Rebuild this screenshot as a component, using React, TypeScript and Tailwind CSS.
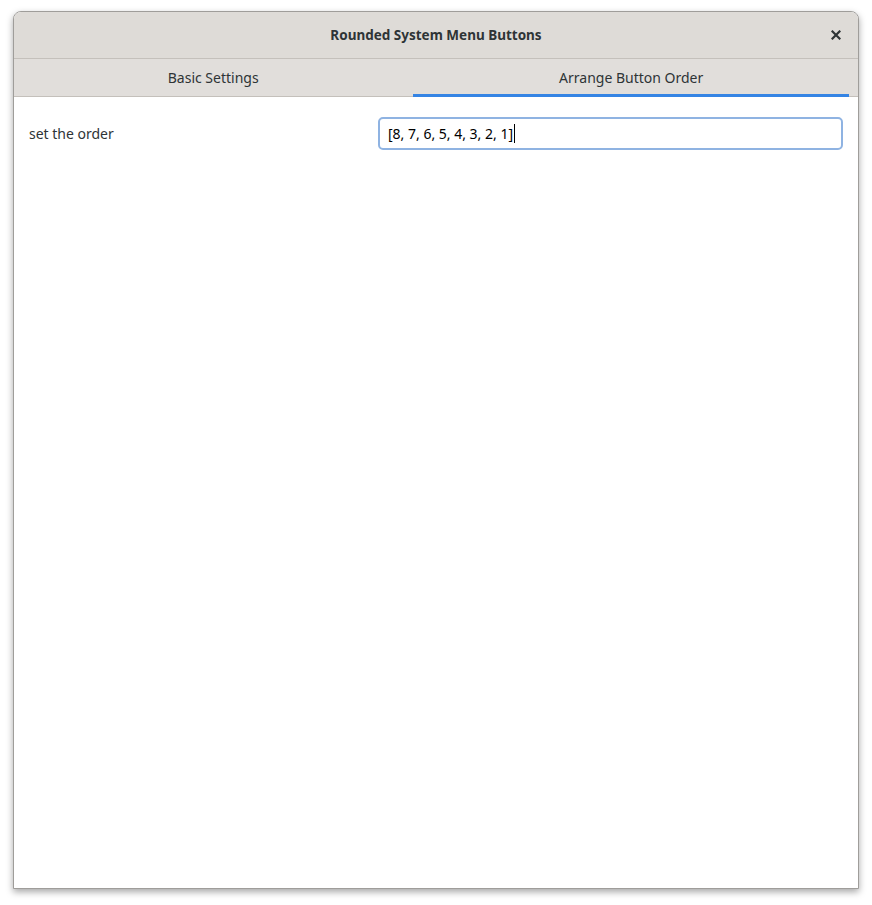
import * as React from 'react';

const font = { fontFamily: '"Noto Sans", "DejaVu Sans", sans-serif' };

export default function App() {
  return (
    <div className="min-h-[905px] w-[872px] bg-white pt-[11px] pl-[13px]" style={font}>
      {/* window */}
      <div className="flex h-[878px] w-[846px] flex-col overflow-hidden rounded-t-[8px] border border-[#9f9d9a] bg-white shadow-[0_3px_7px_rgba(0,0,0,0.35)]">
        {/* header bar */}
        <div className="relative flex h-[47px] shrink-0 items-center justify-center border-b border-[#c4c0bb] bg-[#dedbd7]">
          <span className="text-[13.5px] font-bold text-[#2e3436]">Rounded System Menu Buttons</span>
          <button className="absolute right-[14px] top-[15px] flex h-[16px] w-[16px] items-center justify-center">
            <svg width="10" height="10" viewBox="0 0 10 10">
              <path d="M1.5 1.5 L8.5 8.5 M8.5 1.5 L1.5 8.5" stroke="#2e3436" strokeWidth="2.2" strokeLinecap="square" />
            </svg>
          </button>
        </div>

        {/* tabs */}
        <div className="flex h-[38px] shrink-0 gap-[9px] border-b border-[#c4c0bb] bg-[#e1dedb] pr-[9px] pl-[8px]">
          <div className="mb-[-1px] flex flex-auto items-center justify-center border-b-[3px] border-transparent px-3 pt-[2px] text-[14px] text-[#2e3436]">
            Basic Settings
          </div>
          <div className="mb-[-1px] flex flex-auto items-center justify-center border-b-[3px] border-[#3584e4] px-3 pt-[2px] text-[14px] text-[#2e3436]">
            Arrange Button Order
          </div>
        </div>

        {/* content */}
        <div className="flex flex-1 flex-col bg-white px-[15px] pt-[20px]">
          <div className="flex items-center">
            <span className="flex-1 text-[14px] text-[#2e3436]">set the order</span>
            <div className="flex h-[33px] w-[465px] items-center rounded-[5px] border-2 border-[#8fb3e2] bg-white px-[8px]">
              <span className="text-[14px] text-black">[8, 7, 6, 5, 4, 3, 2, 1]</span>
              <span className="ml-[1px] h-[19px] w-px bg-black" />
            </div>
          </div>
        </div>
      </div>
    </div>
  );
}
